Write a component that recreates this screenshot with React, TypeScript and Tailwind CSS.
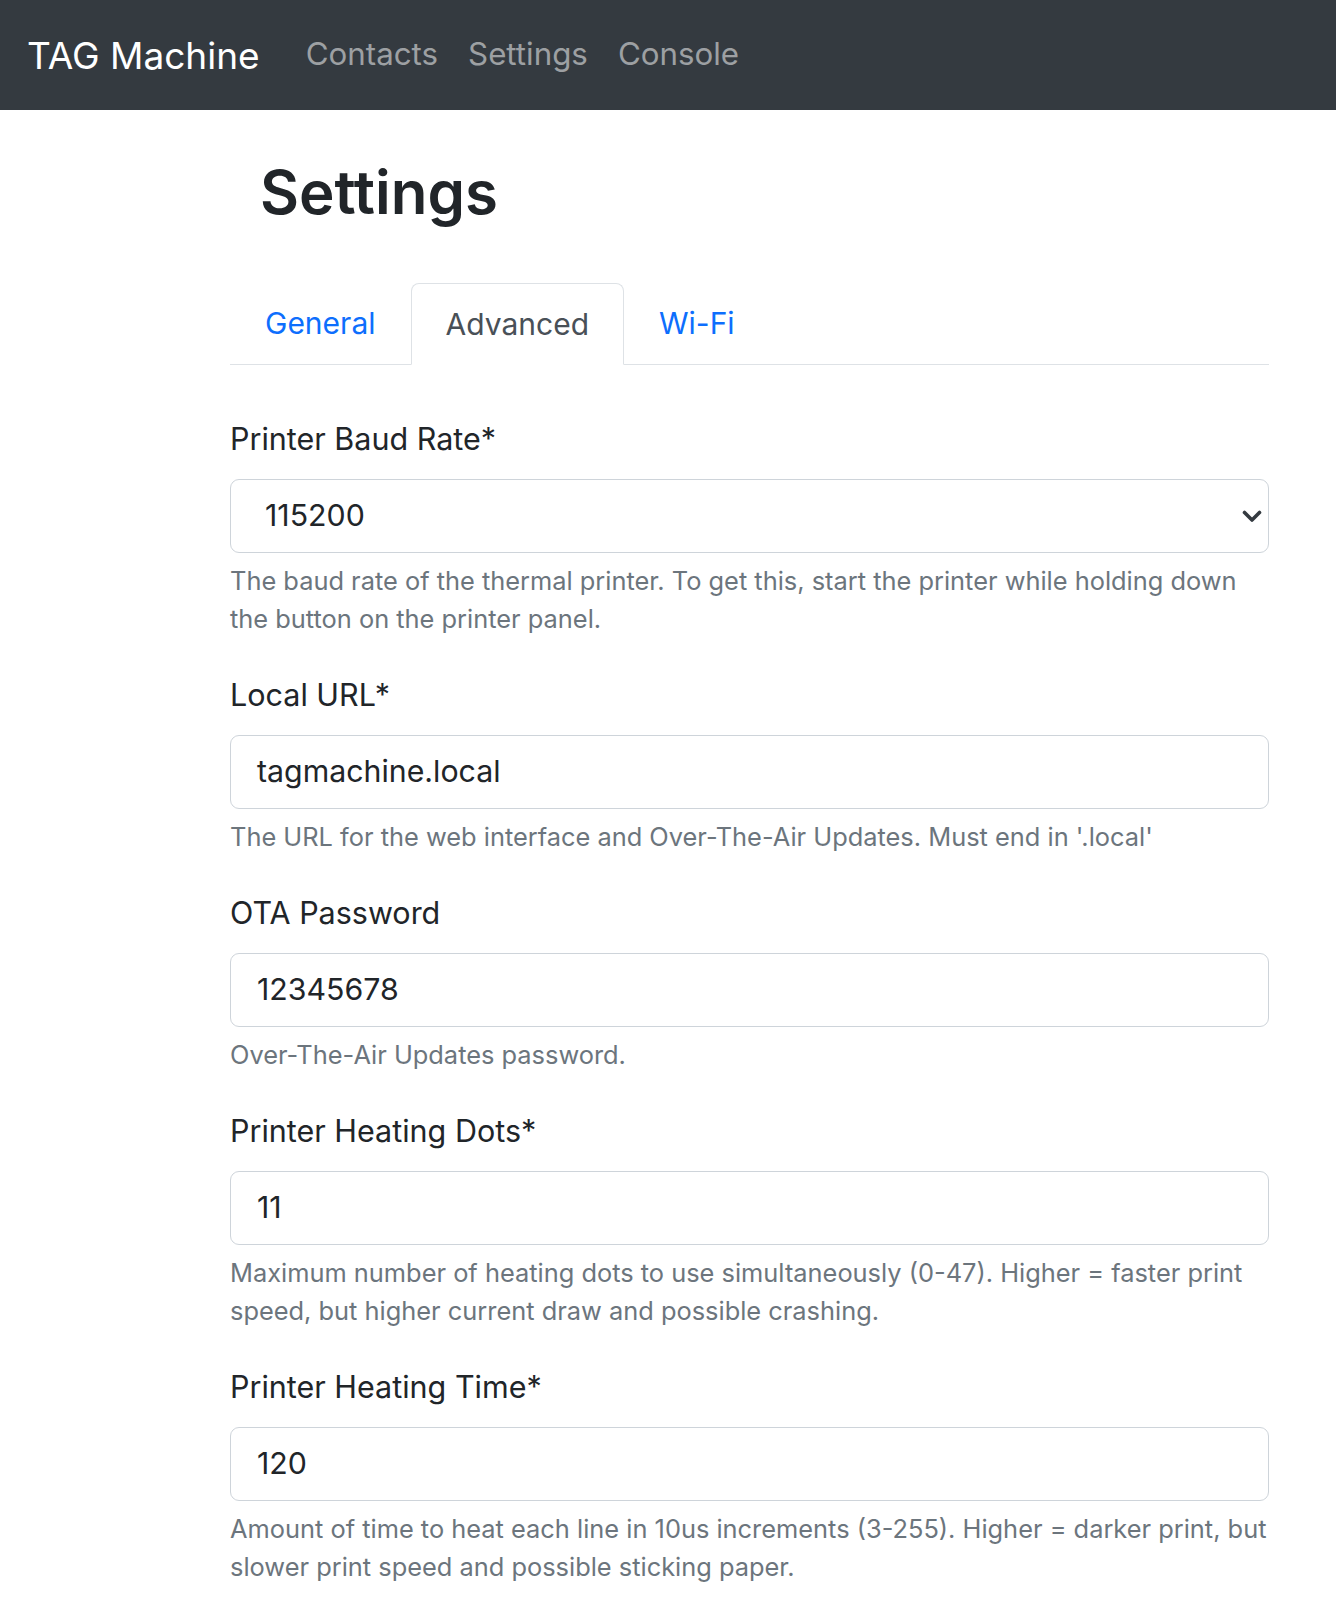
import React from "react";

const font = { fontFamily: "Inter, 'Noto Sans', sans-serif" };

function Field({
  label,
  value,
  help,
  select,
}: {
  label: string;
  value: string;
  help: string;
  select?: boolean;
}) {
  return (
    <div className="flex flex-col">
      <label className="text-[30.5px] leading-[46px] text-[#212529]">{label}</label>
      <div className="mt-[17px] h-[74px] rounded-[9px] border border-[#ced4da] bg-white flex items-center justify-between">
        <span className={`text-[30.3px] text-[#212529] ${select ? "pl-[34px]" : "pl-[26px]"}`}>{value}</span>
        {select && (
          <svg width="20" height="13" viewBox="0 0 20 13" style={{ marginRight: 6 }}>
            <path d="M2.5 2.5 L10 10 L17.5 2.5" fill="none" stroke="#343a40" strokeWidth="3.6" strokeLinecap="round" strokeLinejoin="round" />
          </svg>
        )}
      </div>
      <p className="mt-[9px] text-[25.4px] leading-[38px] text-[#6c757d]">{help}</p>
    </div>
  );
}

export default function App() {
  return (
    <div className="min-h-[1608px] bg-white" style={font}>
      <nav className="h-[110px] bg-[#343a40] flex items-center pl-[27px]">
        <span className="text-[37px] text-white leading-none">TAG Machine</span>
        <div className="flex items-center ml-[46px] gap-[30px] text-[31.3px] text-[#9da0a3] leading-none">
          <span>Contacts</span>
          <span>Settings</span>
          <span>Console</span>
        </div>
      </nav>
      <main className="ml-[230px] w-[1039px] flex flex-col">
        <h1 className="mt-[46px] ml-[30px] text-[60px] leading-[72px] font-semibold text-[#212529]">Settings</h1>
        <div className="mt-[55px] flex border-b border-[#dee2e6] h-[82px]">
          <div className="px-[35px] flex items-center text-[30px] text-[#0d6efd]">General</div>
          <div className="px-[34px] flex items-center text-[30px] text-[#495057] bg-white border border-[#dee2e6] border-b-white rounded-t-[8px] -mb-px">Advanced</div>
          <div className="px-[35px] flex items-center text-[30px] text-[#0d6efd]">Wi-Fi</div>
        </div>
        <div className="mt-[51px] flex flex-col gap-[34px]">
          <Field
            label="Printer Baud Rate*"
            value="115200"
            select
            help="The baud rate of the thermal printer. To get this, start the printer while holding down the button on the printer panel."
          />
          <Field
            label="Local URL*"
            value="tagmachine.local"
            help="The URL for the web interface and Over-The-Air Updates. Must end in '.local'"
          />
          <Field label="OTA Password" value="12345678" help="Over-The-Air Updates password." />
          <Field
            label="Printer Heating Dots*"
            value="11"
            help="Maximum number of heating dots to use simultaneously (0-47). Higher = faster print speed, but higher current draw and possible crashing."
          />
          <Field
            label="Printer Heating Time*"
            value="120"
            help="Amount of time to heat each line in 10us increments (3-255). Higher = darker print, but slower print speed and possible sticking paper."
          />
        </div>
      </main>
    </div>
  );
}
